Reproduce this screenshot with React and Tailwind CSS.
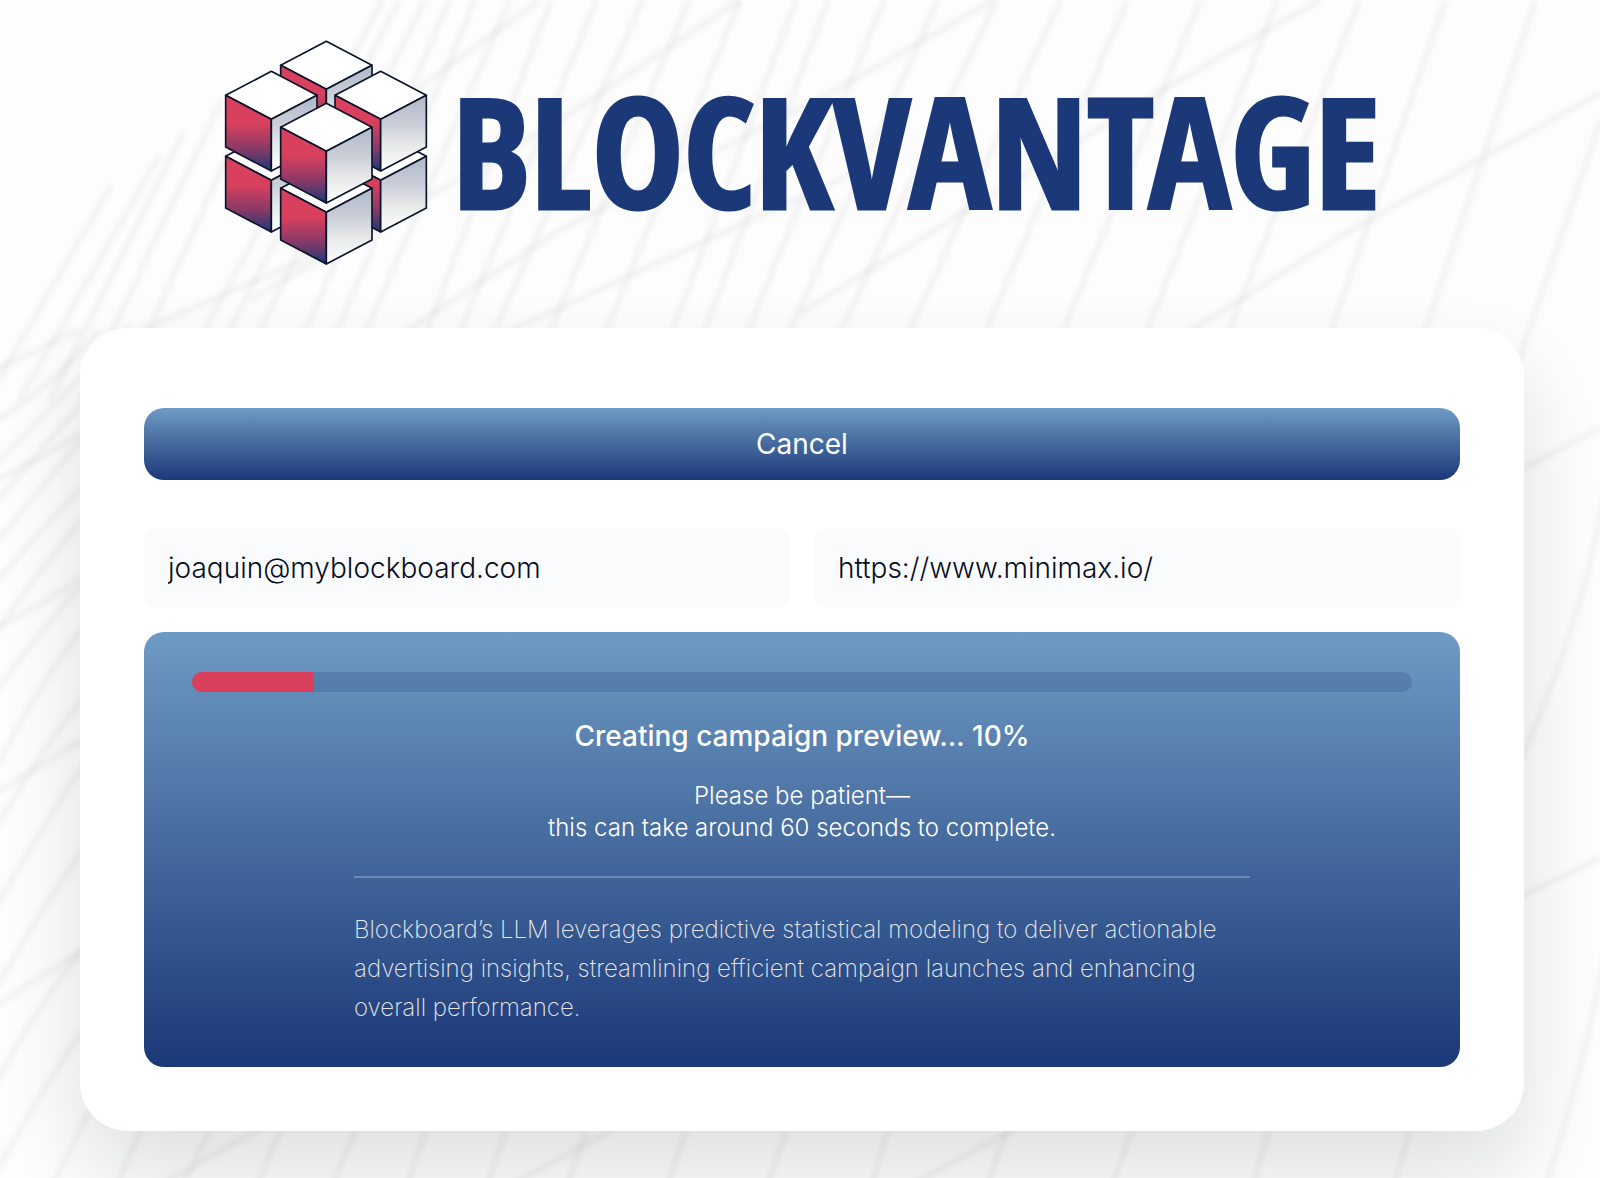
const HALF_W = 137;
const HALF_H = 72;
const SIDE = 155;

const cubes = [
  [182, 304],
  [510, 304],
  [347, 400],
  [347, 31],
  [182, 121],
  [510, 121],
  [347, 217],
];

function Cube({ x, y }) {
  const l = x - HALF_W;
  const r = x + HALF_W;
  const mid = y + HALF_H;
  const low = y + 2 * HALF_H;
  return (
    <g stroke="#0c142b" strokeWidth="5" strokeLinejoin="round">
      <path d={`M${x} ${y}L${r} ${mid}L${x} ${low}L${l} ${mid}Z`} fill="#ffffff" />
      <path d={`M${l} ${mid}L${x} ${low}V${low + SIDE}L${l} ${mid + SIDE}Z`} fill="url(#cube-left)" />
      <path d={`M${r} ${mid}L${x} ${low}V${low + SIDE}L${r} ${mid + SIDE}Z`} fill="url(#cube-right)" />
    </g>
  );
}

function CubeMark() {
  return (
    <svg viewBox="40 27 612 678" className="h-[226px] w-[204px] shrink-0" aria-hidden="true">
      <defs>
        <linearGradient id="cube-left" x1="0" y1="0" x2="0" y2="1">
          <stop offset="0.38" stopColor="#d9405e" />
          <stop offset="0.7" stopColor="#8a3a66" />
          <stop offset="1" stopColor="#1b3878" />
        </linearGradient>
        <linearGradient id="cube-right" x1="0" y1="0" x2="0" y2="1">
          <stop offset="0.1" stopColor="#b6bdca" />
          <stop offset="0.4" stopColor="#ccd0da" />
          <stop offset="0.65" stopColor="#e7e9e9" />
          <stop offset="1" stopColor="#ffffff" />
        </linearGradient>
      </defs>
      {cubes.map(([x, y]) => (
        <Cube key={`${x}-${y}`} x={x} y={y} />
      ))}
    </svg>
  );
}

const streaks = [
  // steep strands behind the header
  "M112 185L-10 395", "M160 155L20 400", "M185 130L50 400", "M222 100L80 400", "M262 80L118 400",
  "M383 0L205 330", "M400 0L230 330", "M425 0L260 330", "M450 0L306 330", "M475 0L338 330",
  "M510 0L367 330", "M551 0L428 330", "M597 0L461 330", "M643 0L495 330", "M689 0L551 330",
  "M740 0L607 330", "M796 0L673 330", "M828 0L705 330", "M884 0L748 330", "M938 0L790 330",
  "M996 0L841 330", "M1060 0L910 330", "M1127 0L986 330", "M1200 0L1063 330", "M1277 0L1147 330",
  "M1359 0L1229 330", "M1445 0L1331 330", "M1535 0L1425 330",
  "M1600 120L1515 370",
  // shallow strands crossing them
  "M540 0L430 80L330 150", "M740 0L560 120L250 300", "M994 0L830 93L560 230L400 335",
  "M1320 0L1157 93L800 313", "M860 170L500 335", "M1600 93L1350 230L1183 335",
  "M420 210L130 335",
  // left margin
  "M100 330Q50 390 -10 425", "M130 325Q60 400 -10 470", "M90 395Q40 450 -10 510", "M90 430Q40 490 -10 550",
  "M90 480Q40 530 -10 590", "M90 510Q40 570 -10 640", "M90 575Q40 630 -10 700", "M90 620Q40 680 -10 780",
  "M90 690Q40 750 -10 840", "M90 755Q40 830 -10 918", "M90 840Q40 910 -10 1000", "M90 940Q40 1000 -10 1095",
  "M90 1020Q40 1090 -10 1185", "M100 1090L50 1190", "M85 430Q50 455 -10 483", "M85 575Q50 600 -10 632",
  "M85 738Q40 765 -10 797", "M85 950Q40 975 -10 1010", "M80 330L-10 372",
  // right margin
  "M1600 427L1515 472", "M1600 857L1515 898", "M1605 480Q1590 600 1520 760", "M1605 950Q1580 1080 1545 1185",
  // below the card
  "M145 1120L115 1190", "M215 1120L180 1190", "M285 1120L255 1190", "M360 1120L330 1190", "M430 1120L405 1190",
  "M510 1120L485 1190", "M590 1120L565 1190", "M690 1120L665 1190", "M790 1120L765 1190", "M890 1120L870 1190",
  "M1010 1120L985 1190", "M1135 1120L1110 1190", "M1270 1120L1252 1190", "M1412 1120L1392 1190",
  "M265 1125L150 1190", "M620 1125L500 1190", "M1020 1125L900 1190",
];

function Backdrop() {
  return (
    <svg
      viewBox="0 0 1600 1178"
      preserveAspectRatio="xMidYMin slice"
      className="absolute inset-0 -z-10 h-full w-full"
      aria-hidden="true"
    >
      <g fill="none" stroke="#000000" strokeOpacity="0.035" strokeWidth="7" className="blur-[2px]">
        {streaks.map((d) => (
          <path key={d} d={d} />
        ))}
      </g>
    </svg>
  );
}

function Field({ id, label, type, value }) {
  return (
    <div className="min-w-0 flex-1">
      <label htmlFor={id} className="sr-only">{label}</label>
      <input
        id={id}
        type={type}
        defaultValue={value}
        className="w-full rounded-xl bg-[#fafbfd] px-6 py-5 text-[28px] leading-10 font-light text-[#060d22] outline-none"
      />
    </div>
  );
}

function ProgressPanel({ percent }) {
  return (
    <section className="mt-6 rounded-[20px] bg-linear-to-b/srgb from-[#6e9bc3] to-[#1b3878] px-12 py-10 text-white">
      <div
        role="progressbar"
        aria-label="Campaign preview progress"
        aria-valuenow={percent}
        className="h-5 overflow-hidden rounded-full bg-[#1b3878]/20"
      >
        <div className="h-full bg-[#da405e]" style={{ width: `${percent}%` }} />
      </div>
      <h2 className="mt-6 text-center text-[28px] leading-10 font-medium">
        Creating campaign preview... {percent}%
      </h2>
      <p className="mt-6 text-center text-2xl font-light">
        Please be patient—
        <br />
        this can take around 60 seconds to complete.
      </p>
      <div className="mx-auto mt-8 max-w-4xl border-t-2 border-white/25 pt-8">
        <p className="text-2xl leading-[39px] font-extralight text-[#e7e9e9]">
          Blockboard’s LLM leverages predictive statistical modeling to deliver actionable advertising insights,
          streamlining efficient campaign launches and enhancing overall performance.
        </p>
      </div>
    </section>
  );
}

export default function App() {
  return (
    <div className="relative isolate min-h-screen overflow-hidden bg-[#fdfdfd] pr-19 pb-12 pl-20 font-['Inter',sans-serif]">
      <Backdrop />
      <header className="flex items-center justify-center gap-6 pt-10 pb-[62px]">
        <CubeMark />
        <h1 className="pb-2 font-['Open_Sans_Condensed','Open_Sans',sans-serif] text-[154px] leading-none font-extrabold text-[#1b3878] [-webkit-text-stroke:3px_#1b3878]">
          BLOCKVANTAGE
        </h1>
      </header>
      <main className="rounded-[48px] bg-white px-16 pt-20 pb-16 shadow-[0_40px_80px_rgba(10,20,20,0.12)]">
        <button
          type="button"
          className="h-18 w-full rounded-[20px] bg-linear-to-b/srgb from-[#6e9bc3] to-[#1b3878] text-[28px] text-white"
        >
          Cancel
        </button>
        <form className="mt-12 flex gap-6">
          <Field id="email" label="Email" type="email" value="joaquin@myblockboard.com" />
          <Field id="website" label="Website" type="url" value="https://www.minimax.io/" />
        </form>
        <ProgressPanel percent={10} />
      </main>
    </div>
  );
}
